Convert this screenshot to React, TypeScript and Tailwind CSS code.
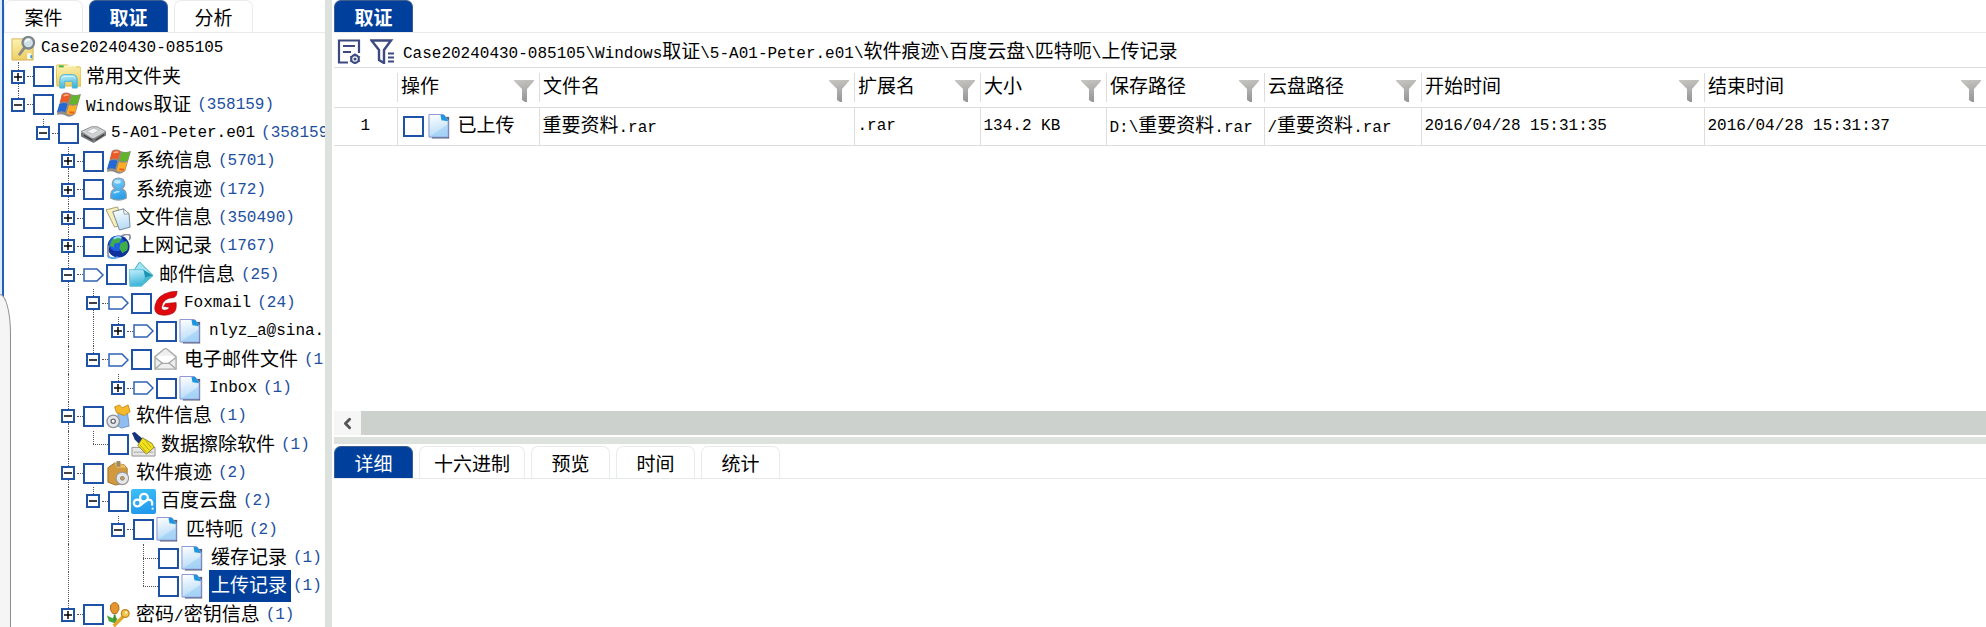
import React, { useState } from "react";
import { ChevronLeft } from "lucide-react";

/* ---------- text ---------- */

function Mixed({ text }: { text: string }) {
  const runs = text.match(/[\x00-\x7f]+|[^\x00-\x7f]+/g) ?? [];
  return (
    <>
      {runs.map((run, i) =>
        /[\x00-\x7f]/.test(run) ? (
          <span key={i} className="font-['Liberation_Mono',monospace] text-[16px]">
            {run}
          </span>
        ) : (
          <span key={i} className="font-['Noto_Sans_CJK_SC',sans-serif] text-[19px]">
            {run}
          </span>
        ),
      )}
    </>
  );
}

/* ---------- icons ---------- */

type IconName =
  | "case" | "folder" | "windows" | "disk" | "user" | "files" | "globe" | "mail"
  | "foxmail" | "page" | "envelope" | "software" | "broom" | "box" | "cloud" | "key";

const iconArt: Record<IconName, React.ReactNode> = {
  case: (
    <>
      <path d="M1 3h22v22H1z" fill="url(#g-yellow)" stroke="#d2b458" />
      <path d="M17 18h4v6h-4z" fill="#fff" />
      <path d="M20 20h2v3h-2z" fill="#3aa0e0" />
      <path d="M14 12l-5 7" stroke="#8c8c84" strokeWidth="3" strokeLinecap="round" />
      <circle cx="18" cy="7" r="6" fill="#cfe2e8" stroke="#7c868c" strokeWidth="2.400" />
      <path d="M15 6q2-3 5-2" stroke="#fff" strokeWidth="1.500" fill="none" />
    </>
  ),
  folder: (
    <>
      <path d="M0 3q0-2 2-2h10l2 2h10q2 0 2 2v18H1z" fill="url(#g-yellow)" stroke="#d8bc45" />
      <path d="M3 2.500h5" stroke="#3db54a" strokeWidth="2" />
      <path d="M10 2.500h11" stroke="#fff6c4" strokeWidth="2" />
      <path d="M4 25v-8q0-6 5-6h8q5 0 5 6v8h-5v-7H9v7z" fill="url(#g-aqua)" stroke="#48b4dc" />
      <path d="M6 15q1-2 4-2h6q3 0 4 2" stroke="#d2f2fc" fill="none" />
    </>
  ),
  windows: (
    <>
      <path d="M6 2q5-3 9 0 5 2 11 0l-6 21q-5 4-9 2-5-3-10-1z" fill="#6b665f" opacity=".75" />
      <path d="M6.500 2.500Q11 0 15 2.200L12.500 11Q9 9 4 11z" fill="#ee5a26" />
      <path d="M16.200 3.200q4 1.500 9-.700L22.500 12q-4.500 2-8.500.200z" fill="#62b52a" />
      <path d="M3.500 12.500q4.500-2.200 8.500-.300L9.500 21Q5.500 19 .8 21.500z" fill="#2468d4" />
      <path d="M13.500 13.500q4 1.700 8.500-.300L19.500 22.500q-4.500 2-8.500.200z" fill="#fcae22" />
      <path d="M8 4q3-1.500 5-.500" stroke="#ffb48c" strokeWidth="1.500" fill="none" />
      <path d="M14 21l5 .500" stroke="#ee5a26" strokeWidth="2" />
    </>
  ),
  disk: (
    <>
      <path d="M0 12v4l13 7 13-8v-4z" fill="#77797b" />
      <path d="M0 11l11-5h6l9 5-12 7h-3z" fill="#cfd1d3" stroke="#8c8e90" />
      <path d="M6 11l7-3.500 6 2-7 4z" fill="#f6f7f8" stroke="#aaa" strokeWidth=".6" />
      <path d="M3 15l9 5M15 20l9-6" stroke="#3d3f42" strokeWidth="1.400" />
    </>
  ),
  user: (
    <>
      <path d="M5 22q-1-9 5-9.500-3.500-2-3.500-5.500Q7 1 13 1T19.500 7q0 3.500-3.500 5.500 6 .500 5 9.500-8 4-16 0z" fill="url(#g-blue)" stroke="#8c9aa4" strokeWidth="1.200" />
      <ellipse cx="12" cy="5" rx="3.500" ry="2" fill="#d6f3ff" opacity=".8" />
      <path d="M8 17q2-2 6-2" stroke="#bfeaff" strokeWidth="1.500" fill="none" />
    </>
  ),
  files: (
    <>
      <path d="M0 4l12-3 6 18-9 3z" fill="#f7f0bc" stroke="#a39d72" />
      <path d="M7 6l11-3 6 5 1 14-11 3z" fill="url(#g-page)" stroke="#74868f" />
      <path d="M18 3l1 5.500 5-.500z" fill="#fff" stroke="#74868f" strokeWidth=".8" />
    </>
  ),
  globe: (
    <>
      <circle cx="13" cy="13" r="11.500" fill="#10309c" />
      <circle cx="11" cy="10" r="8" fill="#1f5fe0" />
      <path d="M6 6q5-5 10-2l-2 5-5 1-1 4-4-2zM15 10l6-3q3 4 1 10l-5 3-3-5z" fill="#3fae4a" />
      <path d="M8 5q4-3 8-1" stroke="#9fd8ff" strokeWidth="2" fill="none" />
      <path d="M3 25Q1 17 3 12M16 2q8-3 9 0 .5 2-1 4" stroke="#8a919c" strokeWidth="1.800" fill="none" />
      <path d="M1.500 22q3 5 11 2" stroke="#59a7e6" strokeWidth="2" fill="none" />
    </>
  ),
  mail: (
    <>
      <path d="M11 0l14 14-12 11H1l4-16z" fill="#9fe6f2" stroke="#39a7bf" />
      <path d="M0 8h15l3 5-5 12H1z" fill="url(#g-aqua)" stroke="#5fc3d6" />
      <path d="M15 8l10 6-8 3z" fill="#1d93b4" />
      <path d="M13 25l3-9 9-2z" fill="#48bcd4" />
    </>
  ),
  foxmail: (
    <path d="M24 0Q8 1 3 10-2 20 4 24q8 3 16-1 4-3 3-11l-11 1-2 3 6 1q-1 3-5 3-4 0-3-4Q10 7 20 7q4-1 4-7z" fill="#e0080c" stroke="#9c0c10" strokeWidth=".6" />
  ),
  page: (
    <>
      <path d="M4 3h18v22.500H4z" fill="#2e3c58" opacity=".8" />
      <path d="M1 .500h15l5 6V24H1z" fill="url(#g-page)" stroke="#8790d2" />
      <path d="M13 1l1 5.500 7 1-4-6.500z" fill="#1c96e0" />
      <path d="M2 23.500L20.500 11v12.500z" fill="#8cc8f2" opacity=".45" />
    </>
  ),
  envelope: (
    <>
      <path d="M1 10L10 2.500q2-1.500 4 0L23 10v13H1z" fill="#eeefee" stroke="#a8aaa8" strokeWidth="1.400" />
      <path d="M4 9h16v5l-8 4-8-4z" fill="#fff" />
      <path d="M1 11l8 6h6l8-6M1 23l8-7M23 23l-8-7" stroke="#a8aaa8" strokeWidth="1.400" fill="none" />
    </>
  ),
  software: (
    <>
      <path d="M13 8l9-2 2 17-8 2-5-3z" fill="#8fbdf0" stroke="#6e96c8" />
      <path d="M9 3l5-2 3 3 6-3 2 7-6 4-8-3z" fill="#f4b92c" stroke="#c88c18" />
      <circle cx="7.500" cy="18" r="6.500" fill="#e4e6ea" stroke="#8e9298" strokeWidth="1.400" />
      <circle cx="7.500" cy="18" r="2.200" fill="#fff" stroke="#666c74" strokeWidth="1.400" />
    </>
  ),
  broom: (
    <>
      <path d="M1 16h24v9H1z" fill="#e6e6e4" stroke="#929290" />
      <path d="M3 21h20" stroke="#a8a8a6" />
      <path d="M1 1l3-1 8 7-4 5-4-4z" fill="#18327c" />
      <path d="M12 6l10 6 2 4-8 7-9-9z" fill="#f2e11c" stroke="#5d5a12" strokeWidth=".7" />
      <path d="M12 11l7 8M15 9l6 7M9 13l7 8" stroke="#8d8716" strokeWidth=".6" />
    </>
  ),
  box: (
    <>
      <path d="M2 7l7-5 10 2 3 4v14l-12 3-8-3z" fill="#d19a3e" stroke="#a07024" />
      <path d="M9 2l2 5 10 0-2-3z" fill="#e9bd6a" />
      <path d="M11 0h4v6h-4z" fill="#9b8a68" />
      <circle cx="17" cy="18" r="6.500" fill="#e6e6e8" stroke="#999" strokeWidth="1.200" />
      <circle cx="17" cy="18" r="2" fill="#c99a48" stroke="#888" />
    </>
  ),
  cloud: (
    <>
      <rect x="0" y="0" width="26" height="26" rx="2" fill="url(#g-baidu)" />
      <g fill="none" stroke="#fff" strokeWidth="2.400" strokeLinecap="round">
        <circle cx="6.500" cy="14.500" r="3.500" />
        <circle cx="13.500" cy="9" r="4" />
        <path d="M9.500 17l7-5.500q5-1.500 5.500 3v2" />
      </g>
      <circle cx="22.500" cy="20.500" r="1.200" fill="#e8f6ff" />
    </>
  ),
  key: (
    <>
      <path d="M1 14l6 3 2-3 3 4-3 4-6-2z" fill="#46a83c" />
      <path d="M5 3q4-5 8 0 2 5-2 9H7Q3 8 5 3z" fill="#e6952e" stroke="#b06c18" />
      <path d="M9 13v7" stroke="#3b8e34" strokeWidth="2" />
      <path d="M19 14L8 25" stroke="#e2a728" strokeWidth="3.500" />
      <circle cx="20" cy="12" r="4" fill="#f5c548" stroke="#bd851c" strokeWidth="1.400" />
      <circle cx="21" cy="11" r="1.200" fill="#fff" />
    </>
  ),
};

function Gradients() {
  const stops: [string, string, string][] = [
    ["g-yellow", "#fdf3b4", "#edd067"],
    ["g-aqua", "#c4f0fa", "#3fb4dc"],
    ["g-blue", "#7fd2fb", "#2a9fe8"],
    ["g-page", "#ffffff", "#b8dcf8"],
    ["g-baidu", "#3cc0f6", "#2299ee"],
    ["g-funnel", "#c8c6c3", "#979998"],
  ];
  return (
    <svg className="absolute h-0 w-0" aria-hidden="true">
      <defs>
        {stops.map(([id, a, b]) => (
          <linearGradient key={id} id={id} x1="0" y1="0" x2=".2" y2="1">
            <stop offset="0" stopColor={a} />
            <stop offset="1" stopColor={b} />
          </linearGradient>
        ))}
      </defs>
    </svg>
  );
}

function Icon({ name }: { name: IconName }) {
  return (
    <svg viewBox="0 0 26 26" className="h-[25px] w-[25px] shrink-0" aria-hidden="true">
      {iconArt[name]}
    </svg>
  );
}

function ColumnFilter() {
  return (
    <svg viewBox="0 0 20 22" className="mt-[8px] h-[22px] w-[20px] shrink-0" aria-hidden="true">
      <path d="M0 0h20v1l-7 8v13h-2l-3-2V9L0 1z" fill="url(#g-funnel)" />
    </svg>
  );
}

/* ---------- tree ---------- */

type Node = {
  label: string;
  icon: IconName;
  count?: string;
  collapsed?: boolean;
  tagged?: boolean;
  selected?: boolean;
  children?: Node[];
};

const tree: Node[] = [
  { label: "常用文件夹", icon: "folder", collapsed: true },
  {
    label: "Windows取证", icon: "windows", count: "358159", children: [
      {
        label: "5-A01-Peter.e01", icon: "disk", count: "358159", children: [
          { label: "系统信息", icon: "windows", count: "5701", collapsed: true },
          { label: "系统痕迹", icon: "user", count: "172", collapsed: true },
          { label: "文件信息", icon: "files", count: "350490", collapsed: true },
          { label: "上网记录", icon: "globe", count: "1767", collapsed: true },
          {
            label: "邮件信息", icon: "mail", count: "25", tagged: true, children: [
              {
                label: "Foxmail", icon: "foxmail", count: "24", tagged: true,
                children: [{ label: "nlyz_a@sina.", icon: "page", collapsed: true, tagged: true }],
              },
              {
                label: "电子邮件文件", icon: "envelope", count: "1", tagged: true,
                children: [{ label: "Inbox", icon: "page", count: "1", collapsed: true, tagged: true }],
              },
            ],
          },
          {
            label: "软件信息", icon: "software", count: "1",
            children: [{ label: "数据擦除软件", icon: "broom", count: "1" }],
          },
          {
            label: "软件痕迹", icon: "box", count: "2", children: [
              {
                label: "百度云盘", icon: "cloud", count: "2", children: [
                  {
                    label: "匹特呃", icon: "page", count: "2", children: [
                      { label: "缓存记录", icon: "page", count: "1" },
                      { label: "上传记录", icon: "page", count: "1", selected: true },
                    ],
                  },
                ],
              },
            ],
          },
          { label: "密码/密钥信息", icon: "key", count: "1", collapsed: true },
        ],
      },
    ],
  },
];

type Row = { node: Node; guides: boolean[]; hasNext: boolean };

function flatten(nodes: Node[], guides: boolean[] = []): Row[] {
  return nodes.flatMap((node, i) => {
    const hasNext = i < nodes.length - 1;
    return [{ node, guides, hasNext }, ...flatten(node.children ?? [], [...guides, hasNext])];
  });
}

function TreeRow({ node, guides, hasNext }: Row) {
  const expandable = node.collapsed || node.children;
  return (
    <li
      role="treeitem"
      aria-level={guides.length + 1}
      aria-selected={!!node.selected}
      className="flex min-h-0 flex-1 items-center"
    >
      {guides.map((on, i) => (
        <span key={i} className="w-[25px] shrink-0 self-stretch pl-[7px]">
          <span className={on ? "block h-full border-l border-dotted border-[#555]" : "block h-full"} />
        </span>
      ))}
      <span className="flex w-[22px] shrink-0 flex-col self-stretch">
        <span className="ml-[7px] flex-1 border-l border-dotted border-[#555]" />
        {expandable ? (
          <span className="flex items-center">
            <button
              aria-label={node.collapsed ? "展开" : "收起"}
              className="grid h-[14px] w-[14px] place-items-center border-2 border-[#1d52a6] bg-white"
            >
              <svg viewBox="0 0 8 8" className="h-[8px] w-[8px]" aria-hidden="true">
                <path d={node.collapsed ? "M0 4h8M4 0v8" : "M0 4h8"} stroke="#000" strokeWidth="1.500" />
              </svg>
            </button>
            <span className="ml-[2px] flex-1 border-t border-dotted border-[#555]" />
          </span>
        ) : (
          <span className="ml-[7px] border-t border-dotted border-[#555]" />
        )}
        <span className={hasNext ? "ml-[7px] flex-1 border-l border-dotted border-[#555]" : "flex-1"} />
      </span>
      {node.tagged && (
        <svg viewBox="0 0 21 14" className="mr-[2px] h-[14px] w-[21px] shrink-0" aria-hidden="true">
          <path d="M1 1h13l6 6-6 6H1z" fill="#fff" stroke="#2f62b4" strokeWidth="1.500" />
        </svg>
      )}
      <label className="flex items-center whitespace-nowrap">
        <input
          type="checkbox"
          className="mr-[2px] h-[21px] w-[21px] shrink-0 appearance-none border-2 border-[#1d52a6] bg-white checked:bg-[#1d52a6]"
        />
        <Icon name={node.icon} />
        <span
          className={
            node.selected
              ? "ml-[3px] bg-[#00409c] pr-[4px] pl-[2px] leading-[28px] text-white"
              : "ml-[3px] px-[2px] leading-[28px]"
          }
        >
          <Mixed text={node.label} />
        </span>
      </label>
      {node.count && (
        <span className={node.selected ? "ml-[2px] leading-[28px] text-[#1d4f9f]" : "ml-[4px] leading-[28px] text-[#1d4f9f]"}>
          <Mixed text={`(${node.count})`} />
        </span>
      )}
    </li>
  );
}

/* ---------- tabs ---------- */

function Tabs({ items, initial, bold }: { items: string[]; initial: number; bold?: boolean }) {
  const [active, setActive] = useState(initial);
  return (
    <div role="tablist" className="flex h-[33px] shrink-0 items-end gap-[6px] border-b border-[#e6eae8]">
      {items.map((item, i) => (
        <button
          key={item}
          role="tab"
          aria-selected={i === active}
          onClick={() => setActive(i)}
          className={
            i === active
              ? `h-[32px] min-w-[79px] rounded-t-[7px] border border-b-0 border-[#3c5f8f] bg-[#00409c] px-[14px] leading-[32px] text-white ${bold ? "font-bold" : ""}`
              : "h-[32px] min-w-[79px] rounded-t-[7px] border border-b-0 border-[#e9eceb] px-[14px] leading-[32px]"
          }
        >
          <Mixed text={item} />
        </button>
      ))}
    </div>
  );
}

/* ---------- table ---------- */

const columns = [
  { title: "操作", width: "w-[142px]" },
  { title: "文件名", width: "w-[315px]" },
  { title: "扩展名", width: "w-[126px]" },
  { title: "大小", width: "w-[126px]" },
  { title: "保存路径", width: "w-[158px]" },
  { title: "云盘路径", width: "w-[157px]" },
  { title: "开始时间", width: "w-[283px]" },
  { title: "结束时间", width: "w-auto" },
];

const values = [
  "重要资料.rar",
  ".rar",
  "134.2 KB",
  "D:\\重要资料.rar",
  "/重要资料.rar",
  "2016/04/28 15:31:35",
  "2016/04/28 15:31:37",
];

function Records() {
  return (
    <table className="w-full table-fixed border-collapse">
      <thead>
        <tr className="h-[39px] border-b border-[#dcdddc]">
          <th className="w-[63px]" aria-label="序号" />
          {columns.map((c) => (
            <th key={c.title} className={`p-0 font-normal ${c.width}`}>
              <div className="flex h-[29px] items-center justify-between border-l border-[#dcdddc] pr-[5px] pl-[3px] leading-[31px]">
                <span className="whitespace-nowrap">
                  <Mixed text={c.title} />
                </span>
                <ColumnFilter />
              </div>
            </th>
          ))}
        </tr>
      </thead>
      <tbody>
        <tr className="h-[38px] border-b border-[#dcdddc] leading-[32px]">
          <td className="p-0 text-center">
            <Mixed text="1" />
          </td>
          <td className="border-l border-[#dcdddc] p-0">
            <label className="flex items-center pl-[5px]">
              <input
                type="checkbox"
                className="mr-[4px] h-[21px] w-[21px] shrink-0 appearance-none border-2 border-[#1d52a6] bg-white checked:bg-[#1d52a6]"
              />
              <Icon name="page" />
              <span className="ml-[5px] whitespace-nowrap">
                <Mixed text="已上传" />
              </span>
            </label>
          </td>
          {values.map((v) => (
            <td key={v} className="overflow-hidden border-l border-[#dcdddc] p-0 pl-[3px] whitespace-nowrap">
              <Mixed text={v} />
            </td>
          ))}
        </tr>
      </tbody>
    </table>
  );
}

/* ---------- page ---------- */

export default function App() {
  return (
    <div className="relative flex h-screen overflow-hidden bg-white font-['Liberation_Mono','Noto_Sans_CJK_SC',monospace] text-[16px] text-black">
      <Gradients />
      <div className="w-[4px] shrink-0 border-r-2 border-[#1f5fc0] bg-[#dfeafa]" />
      <div className="absolute top-[294px] bottom-0 left-0 w-[11px] rounded-tr-[11px_40px] border-t border-r border-[#8c8c8c] bg-[#f5f5f5]" />

      <aside className="flex w-[321px] shrink-0 flex-col overflow-hidden">
        <Tabs items={["案件", "取证", "分析"]} initial={1} bold />
        <ul role="tree" className="mt-px flex h-[595px] shrink-0 flex-col overflow-hidden pl-[7px]">
          <li role="treeitem" aria-expanded="true" className="flex min-h-0 flex-1 items-center">
            <Icon name="case" />
            <span className="ml-[5px] leading-[28px]">
              <Mixed text="Case20240430-085105" />
            </span>
          </li>
          {flatten(tree).map((row, i) => (
            <TreeRow key={i} {...row} />
          ))}
        </ul>
      </aside>

      <div className="mr-[2px] w-[7px] shrink-0 bg-[#dde2df]" />

      <main className="flex min-w-0 flex-1 flex-col">
        <Tabs items={["取证"]} initial={0} bold />
        <div className="flex h-[35px] shrink-0 items-center border-b border-[#dcdddc] pt-[3px] pl-[3px]">
          <button aria-label="视图设置">
            <svg viewBox="0 0 24 25" className="h-[25px] w-[24px]" fill="none" stroke="#3c4a80" strokeWidth="2.200" aria-hidden="true">
              <path d="M11 23.500H2V1.500h20V14M6 7h12M6 13h8" />
              <circle cx="18" cy="20" r="3.800" />
              <circle cx="18" cy="20" r=".8" strokeWidth="1.500" />
              <path d="M18 14.500v2M18 23.500v1.500M13 17.500l1.500 1M21.500 21.500l1.500 1M23 17.500l-1.500 1M14.500 21.500l-1.500 1" strokeWidth="1.500" />
            </svg>
          </button>
          <button aria-label="筛选" className="ml-[9px]">
            <svg viewBox="0 0 24 25" className="h-[25px] w-[24px]" fill="none" stroke="#3c4a80" strokeWidth="2.400" aria-hidden="true">
              <path d="M1.500 1.500h19.500l-7 9.500V24l-5-3V11z" />
              <path d="M18 14.500h6M18 18.500h6M18 22.500h6" strokeWidth="1.800" />
            </svg>
          </button>
          <nav aria-label="路径" className="ml-[9px] whitespace-nowrap leading-[33px]">
            <Mixed text={"Case20240430-085105\\Windows取证\\5-A01-Peter.e01\\软件痕迹\\百度云盘\\匹特呃\\上传记录"} />
          </nav>
        </div>
        <Records />
        <div className="min-h-0 flex-1" />
        <div className="flex h-[24px] shrink-0 bg-[#cdd1cd]">
          <button aria-label="向左滚动" className="grid w-[27px] place-items-center bg-[#f6f6f6]">
            <ChevronLeft className="h-[17px] w-[17px] text-[#555]" strokeWidth={4} />
          </button>
        </div>
        <div className="mt-[2px] h-[7px] shrink-0 bg-[#dde2df]" />
        <section className="mt-[2px] h-[181px] shrink-0">
          <Tabs items={["详细", "十六进制", "预览", "时间", "统计"]} initial={0} />
        </section>
      </main>
    </div>
  );
}
